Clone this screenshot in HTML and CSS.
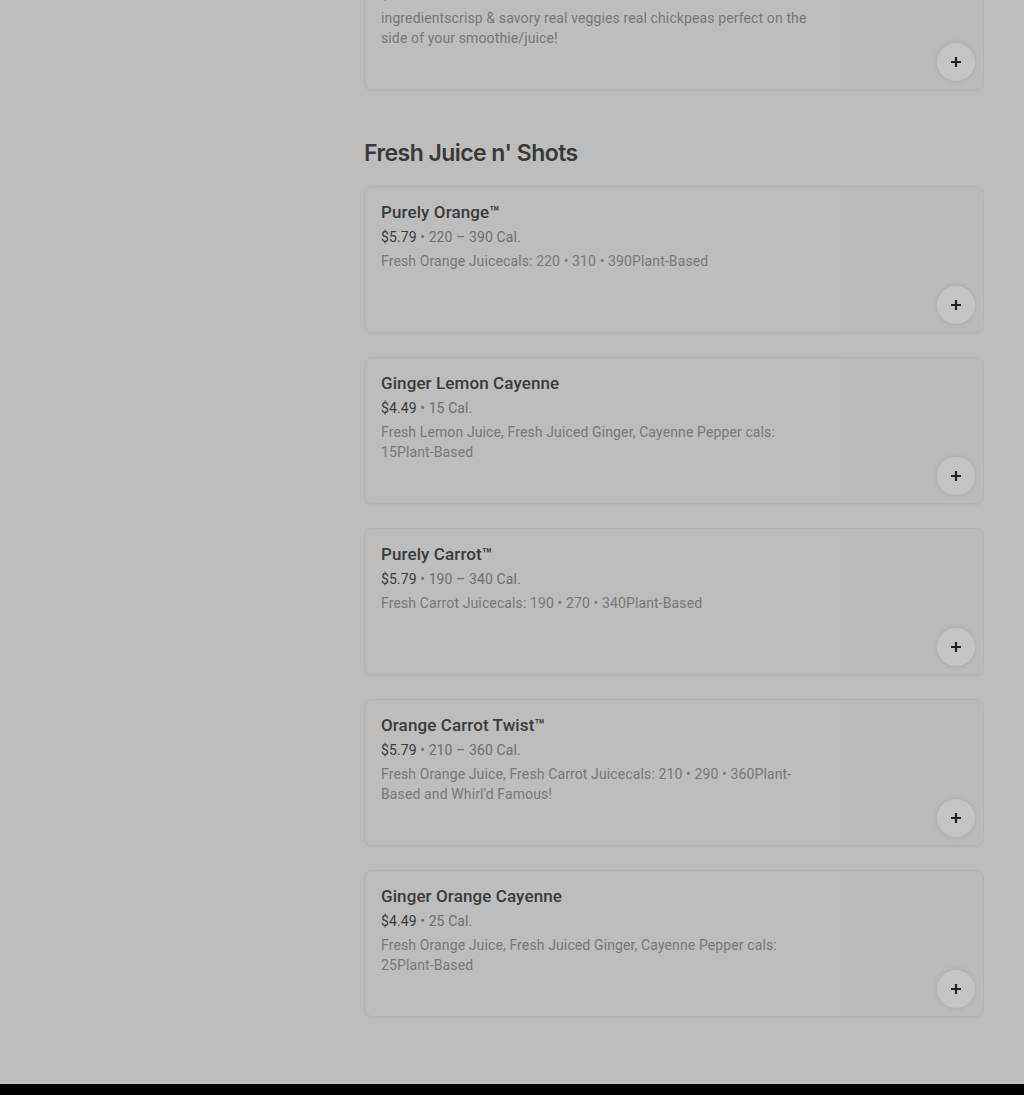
FILE: index.html
```html
<!DOCTYPE html>
<html lang="en">
<head>
  <meta charset="UTF-8" />
  <meta name="viewport" content="width=device-width, initial-scale=1.0" />
  <title>Menu</title>
  <link rel="stylesheet" href="styles.css">
</head>
<body>
  <div class="page">
    <aside class="sidebar"></aside>

    <main class="menu">
      <!-- previous section, scrolled past -->
      <section class="section first">
        <div class="item">
          <div class="item-info">
            <div class="item-title">Veggie Chips</div>
            <div class="item-meta"><span class="price">$2.49</span> • 130 Cal.</div>
            <div class="item-desc">ingredientscrisp &amp; savory real veggies real chickpeas perfect on the side of your smoothie/juice!</div>
          </div>
          <div class="item-img">
            <button class="add"><svg viewBox="0 0 12 12"><path d="M6 1v10M1 6h10"/></svg></button>
          </div>
        </div>
      </section>

      <section class="section">
        <h2 class="section-title">Fresh Juice n' Shots</h2>

        <div class="item">
          <div class="item-info">
            <div class="item-title">Purely Orange™</div>
            <div class="item-meta"><span class="price">$5.79</span> • 220 – 390 Cal.</div>
            <div class="item-desc">Fresh Orange Juicecals: 220 • 310 • 390Plant-Based</div>
          </div>
          <div class="item-img">
            <button class="add"><svg viewBox="0 0 12 12"><path d="M6 1v10M1 6h10"/></svg></button>
          </div>
        </div>

        <div class="item">
          <div class="item-info">
            <div class="item-title">Ginger Lemon Cayenne</div>
            <div class="item-meta"><span class="price">$4.49</span> • 15 Cal.</div>
            <div class="item-desc">Fresh Lemon Juice, Fresh Juiced Ginger, Cayenne Pepper cals: 15Plant-Based</div>
          </div>
          <div class="item-img">
            <button class="add"><svg viewBox="0 0 12 12"><path d="M6 1v10M1 6h10"/></svg></button>
          </div>
        </div>

        <div class="item">
          <div class="item-info">
            <div class="item-title">Purely Carrot™</div>
            <div class="item-meta"><span class="price">$5.79</span> • 190 – 340 Cal.</div>
            <div class="item-desc">Fresh Carrot Juicecals: 190 • 270 • 340Plant-Based</div>
          </div>
          <div class="item-img">
            <button class="add"><svg viewBox="0 0 12 12"><path d="M6 1v10M1 6h10"/></svg></button>
          </div>
        </div>

        <div class="item">
          <div class="item-info">
            <div class="item-title">Orange Carrot Twist™</div>
            <div class="item-meta"><span class="price">$5.79</span> • 210 – 360 Cal.</div>
            <div class="item-desc">Fresh Orange Juice, Fresh Carrot Juicecals: 210 • 290 • 360Plant-Based and Whirl'd Famous!</div>
          </div>
          <div class="item-img">
            <button class="add"><svg viewBox="0 0 12 12"><path d="M6 1v10M1 6h10"/></svg></button>
          </div>
        </div>

        <div class="item">
          <div class="item-info">
            <div class="item-title">Ginger Orange Cayenne</div>
            <div class="item-meta"><span class="price">$4.49</span> • 25 Cal.</div>
            <div class="item-desc">Fresh Orange Juice, Fresh Juiced Ginger, Cayenne Pepper cals: 25Plant-Based</div>
          </div>
          <div class="item-img">
            <button class="add"><svg viewBox="0 0 12 12"><path d="M6 1v10M1 6h10"/></svg></button>
          </div>
        </div>
      </section>
    </main>
  </div>

  <footer class="footer"></footer>
</body>
</html>
```

FILE: styles.css
```css
body {
  margin: 0;
  background-color: #bdbdbd;
  font-family: Roboto, "Liberation Sans", sans-serif;
  color: #2e2e2e;
  overflow: hidden;
}
.page {
  display: grid;
  grid-template-columns: 364px 620px;
}
.menu {
  padding-bottom: 65px;
}
.section {
  display: flex;
  flex-direction: column;
  gap: 24px;
}
.section.first {
  margin-top: -57px;
}
.section-title {
  margin: 47px 0 -7px;
  font-family: Inter, Roboto, sans-serif;
  font-size: 23px;
  font-weight: 600;
  line-height: 32px;
  letter-spacing: -0.55px;
  color: #393939;
}
/* Menu item card */
.item {
  display: flex;
  height: 147px;
  box-sizing: border-box;
  border: 1px solid #b3b3b3;
  border-radius: 8px;
  box-shadow: 0 2px 0 #b9b9b9;
  overflow: hidden;
}
.item-info {
  flex: 1;
  padding: 15px 16px 16px;
}
.item-title {
  font-size: 17px;
  font-weight: 500;
  line-height: 20px;
  letter-spacing: 0.1px;
  color: #3a3a3a;
  margin-bottom: 5px;
}
.item-meta {
  font-size: 14px;
  line-height: 20px;
  letter-spacing: 0.1px;
  color: #6e6e6e;
  margin-bottom: 4px;
}
.price {
  color: #3a3a3a;
}
.item-desc {
  font-size: 14px;
  line-height: 20px;
  letter-spacing: 0.12px;
  color: #777;
}
.item-img {
  width: 144px;
  position: relative;
  background-color: #bbbbbb;
}
.add {
  position: absolute;
  right: 8px;
  bottom: 8px;
  width: 38px;
  height: 38px;
  border: none;
  border-radius: 50%;
  background-color: #c5c5c5;
  box-shadow: 0 0 6px rgba(0, 0, 0, 0.1);
  padding: 0;
  display: flex;
  justify-content: center;
  align-items: center;
}
.add svg {
  width: 12px;
  height: 12px;
  fill: none;
  stroke: #222;
  stroke-width: 2.2;
}
.footer {
  height: 11px;
  background-color: #000;
  border-top: 2px solid #c3c3c3;
}
```
